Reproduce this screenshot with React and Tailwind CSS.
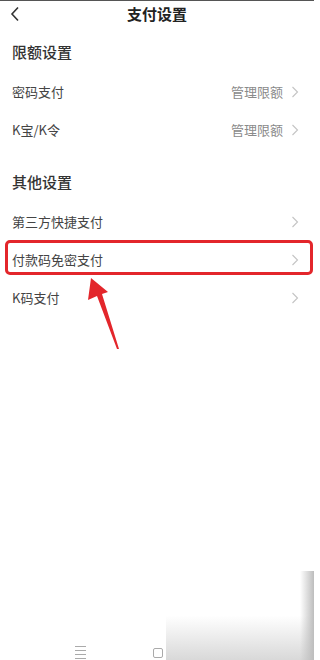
import { useState } from "react";

const Chevron = () => (
  <svg width="8" height="12" viewBox="0 0 8 12" className="shrink-0">
    <polyline points="1.5,1 6.5,6 1.5,11" fill="none" stroke="#c4c4c4" strokeWidth="1.1" />
  </svg>
);

const Row = ({ label, right, highlight }) => (
  <div className="relative flex items-center h-[38px] pl-[12px] pr-[15px]">
    <span className="flex-1 text-[13px] text-[#444]">{label}</span>
    {right && <span className="text-[13px] text-[#8a8a8a] mr-[8px]">{right}</span>}
    <Chevron />
    {highlight && (
      <div className="absolute left-[5px] right-[1px] top-[-1px] h-[35px] border-[3px] border-[#e3262b] rounded-[5px]" />
    )}
  </div>
);

const SectionTitle = ({ children, top }) => (
  <div className={`px-[12px] ${top} pb-[11px] leading-[20px] text-[15px] font-medium text-[#333]`}>
    {children}
  </div>
);

export default function App() {
  const [rows] = useState([
    { label: "第三方快捷支付" },
    { label: "付款码免密支付", highlight: true },
    { label: "K码支付" },
  ]);

  return (
    <div
      className="relative w-[314px] h-[660px] bg-white overflow-hidden flex flex-col border-t border-[#555]"
      style={{ fontFamily: '"Noto Sans CJK SC", "Noto Sans", sans-serif' }}
    >
      {/* header */}
      <div className="relative flex items-center justify-center h-[26px]">
        <svg width="10" height="16" viewBox="0 0 10 16" className="absolute left-[10px] top-[5px]">
          <polyline points="8,1.5 2,8 8,14.5" fill="none" stroke="#333" strokeWidth="1.6" />
        </svg>
        <span className="text-[15px] font-bold text-[#222]">支付设置</span>
      </div>

      <div className="flex-1">
        <SectionTitle top="pt-[15px]">限额设置</SectionTitle>
        <Row label="密码支付" right="管理限额" />
        <Row label="K宝/K令" right="管理限额" />

        <SectionTitle top="pt-[23px]">其他设置</SectionTitle>
        {rows.map((r) => (
          <Row key={r.label} label={r.label} highlight={r.highlight} />
        ))}
      </div>

      {/* bottom nav */}
      <div className="relative flex items-end h-[14px] pl-[75px]">
        <div className="flex flex-col gap-[3px] w-[11px] mb-[1px]">
          <div className="h-px bg-[#aaa]" />
          <div className="h-px bg-[#aaa]" />
          <div className="h-px bg-[#aaa]" />
          <div className="h-px bg-[#aaa]" />
        </div>
        <div className="ml-[67px] mb-[2px] w-[10px] h-[10px] border border-[#aaa] rounded-[2px]" />
      </div>

      {/* annotation arrow */}
      <svg width="50" height="84" viewBox="0 0 50 84" className="absolute left-[80px] top-[269px]">
        <polygon points="11,8 8,30 17,26 37,79 39,79 22,24 28,22" fill="#e3262b" />
      </svg>

      {/* watermark shade */}
      <div className="absolute left-[166px] right-0 top-[570px] bottom-0 bg-gradient-to-b from-transparent via-white to-[#cfcfcf] opacity-80" />
      <div className="absolute right-0 top-[570px] bottom-0 w-[14px] bg-gradient-to-r from-transparent to-[#bdbdbd]" />
    </div>
  );
}
